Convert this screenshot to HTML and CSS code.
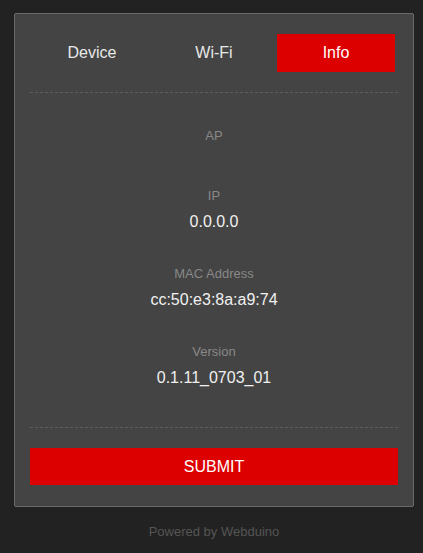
FILE: index.html
```html
<!DOCTYPE html>
<html>
<head>
<meta charset="utf-8">
<link rel="stylesheet" href="styles.css">
</head>
<body>
<div class="card">
  <div class="tabs">
    <div class="tab">Device</div>
    <div class="tab">Wi-Fi</div>
    <div class="tab active">Info</div>
  </div>
  <hr class="sep">
  <div class="info">
    <div class="group"><div class="label">AP</div><div class="value"></div></div>
    <div class="group"><div class="label">IP</div><div class="value">0.0.0.0</div></div>
    <div class="group"><div class="label">MAC Address</div><div class="value">cc:50:e3:8a:a9:74</div></div>
    <div class="group last"><div class="label">Version</div><div class="value">0.1.11_0703_01</div></div>
  </div>
  <hr class="sep">
  <button class="submit">SUBMIT</button>
</div>
<div class="footer">Powered by Webduino</div>
</body>
</html>
```
FILE: styles.css
```css
html, body {
  margin: 0;
  padding: 0;
  background: #222222;
  font-family: "Liberation Sans", Arial, sans-serif;
}
body {
  padding: 13px 0 0 14px;
}
.card {
  box-sizing: border-box;
  width: 400px;
  height: 494px;
  background: #444444;
  border: 1px solid #6a6a6a;
  border-radius: 2px;
  padding: 20px 15px 20px 15px;
}
.tabs {
  display: flex;
  justify-content: center;
  gap: 4px;
}
.tab {
  width: 118px;
  height: 38px;
  line-height: 38px;
  text-align: center;
  font-size: 16px;
  color: #e8e8e8;
}
.tab.active {
  background: #dd0000;
  color: #ffffff;
}
.sep {
  margin: 20px 0 0 0;
  border: 0;
  border-top: 1px dashed #5e5e5e;
  height: 0;
}
.info {
  padding-top: 34px;
  text-align: center;
}
.group {
  display: flex;
  flex-direction: column;
  margin-bottom: 34px;
}
.group.last {
  margin-bottom: 40px;
}
.label {
  font-size: 13px;
  line-height: 18px;
  color: #888888;
}
.value {
  margin-top: 8px;
  font-size: 16px;
  line-height: 18px;
  color: #f0f0f0;
}
.sep + .submit {
  margin-top: 20px;
}
.submit {
  display: block;
  width: 100%;
  height: 37px;
  border: 0;
  border-radius: 0;
  background: #dd0000;
  color: #ffffff;
  font-family: "Liberation Sans", Arial, sans-serif;
  font-size: 16px;
  padding: 0;
}
.footer {
  width: 400px;
  text-align: center;
  font-size: 13px;
  color: #555555;
  margin-top: 17px;
  line-height: 16px;
}
```
